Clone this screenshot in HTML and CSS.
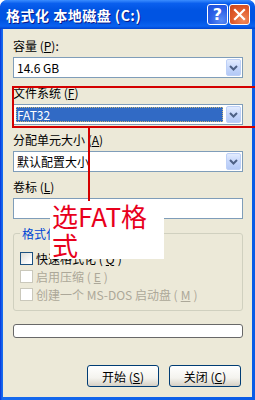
FILE: index.html
```html
<!DOCTYPE html>
<html lang="zh-CN">

<head>
    <meta charset="utf-8">
    <title>格式化 本地磁盘 (C:)</title>
    <link rel="stylesheet" href="styles.css">
</head>

<body>
    <div class="window">
        <div class="titlebar">
            <span class="title">格式化 本地磁盘 (C:)</span>
            <div class="caption-buttons">
                <span class="cap-btn help">?</span>
                <span class="cap-btn close">
                    <svg width="13" height="13" viewBox="0 0 13 13">
                        <path d="M2 2 L11 11 M11 2 L2 11" stroke="#fff" stroke-width="2.2" stroke-linecap="square" />
                    </svg>
                </span>
            </div>
        </div>

        <div class="client">
            <div class="field-label">容量 (<u>P</u>):</div>
            <div class="combo">
                <span class="combo-text">14.6 GB</span>
                <span class="drop"><svg width="9" height="6" viewBox="0 0 9 6"><path d="M1 1 L4.5 4.5 L8 1" fill="none" stroke="#4d6185" stroke-width="2" /></svg></span>
            </div>

            <div class="field-label">文件系统 (<u>F</u>)</div>
            <div class="combo">
                <span class="combo-text selected">FAT32</span>
                <span class="drop"><svg width="9" height="6" viewBox="0 0 9 6"><path d="M1 1 L4.5 4.5 L8 1" fill="none" stroke="#4d6185" stroke-width="2" /></svg></span>
            </div>

            <div class="field-label">分配单元大小 (<u>A</u>)</div>
            <div class="combo">
                <span class="combo-text">默认配置大小</span>
                <span class="drop"><svg width="9" height="6" viewBox="0 0 9 6"><path d="M1 1 L4.5 4.5 L8 1" fill="none" stroke="#4d6185" stroke-width="2" /></svg></span>
            </div>

            <div class="field-label">卷标 (<u>L</u>)</div>
            <div class="textbox"></div>

            <fieldset class="group">
                <legend>格式化选项</legend>
                <div class="check"><span class="box"></span>快速格式化 (<u>Q</u>)</div>
                <div class="check disabled"><span class="box"></span>启用压缩 (<u>E</u>)</div>
                <div class="check disabled"><span class="box"></span>创建一个 MS-DOS 启动盘 (<u>M</u>)</div>
            </fieldset>

            <div class="progress"></div>

            <div class="actions">
                <span class="btn">开始 (<u>S</u>)</span>
                <span class="btn">关闭 (<u>C</u>)</span>
            </div>
        </div>

        <!-- Annotation drawn over the dialog -->
        <div class="mark-box"></div>
        <div class="mark-line"></div>
        <div class="mark-note">选FAT格式</div>
    </div>
</body>

</html>
```

FILE: styles.css
```css
* {
    margin: 0;
    padding: 0;
    box-sizing: border-box;
}

html,
body {
    width: 255px;
    height: 400px;
    overflow: hidden;
    background: #fff;
    font-family: "Noto Sans CJK SC", sans-serif;
    font-size: 12px;
    color: #000;
}

u {
    text-decoration: underline;
    text-underline-offset: 1px;
}

/* Window frame */
.window {
    position: relative;
    width: 255px;
    height: 400px;
    display: flex;
    flex-direction: column;
    background: linear-gradient(90deg, #0831d9 0px, #166aee 2px, #0a5be6 100%);
    border-radius: 7px 7px 0 0;
    overflow: hidden;
}

.titlebar {
    height: 29px;
    display: flex;
    align-items: center;
    justify-content: space-between;
    padding: 0 5px 0 6px;
    background: linear-gradient(180deg, #3b8dff 0%, #0a5fee 12%, #0054e3 35%, #0054e3 70%, #0a62f0 90%, #0043cf 100%);
    border-radius: 7px 7px 0 0;
}

.title {
    color: #fff;
    font-weight: bold;
    font-size: 14px;
    letter-spacing: 0.5px;
    text-shadow: 1px 1px 0 #0a1a8a;
    margin-top: 1px;
}

.caption-buttons {
    display: flex;
    gap: 1px;
}

.cap-btn {
    width: 21px;
    height: 21px;
    display: flex;
    align-items: center;
    justify-content: center;
    border: 1px solid #fff;
    border-radius: 3px;
    color: #fff;
}

.help {
    background: radial-gradient(circle at 70% 80%, #5a8cf5 0%, #2a5ee6 55%, #1c4fdb 100%);
    font-family: "DejaVu Sans", sans-serif;
    font-weight: bold;
    font-size: 16px;
}

.close {
    background: radial-gradient(circle at 70% 80%, #f08a5c 0%, #e05a2a 55%, #c8431a 100%);
}

/* Client area */
.client {
    flex: 1;
    margin: 0 3px 3px 3px;
    background: #ece9d8;
    display: flex;
    flex-direction: column;
    padding: 10px 9px 10px 10px;
}

.field-label {
    height: 13px;
    line-height: 13px;
    margin-bottom: 5px;
}

.combo {
    height: 21px;
    display: flex;
    align-items: center;
    justify-content: space-between;
    background: #fff;
    border: 1px solid #7f9db9;
    padding: 0 1px 0 2px;
    margin-bottom: 8px;
}

.combo-text {
    flex: 1;
    height: 15px;
    line-height: 15px;
    padding-left: 1px;
}

.combo-text.selected {
    background: #316ac5;
    color: #fff;
    outline: 1px dotted #c9b87a;
    outline-offset: -1px;
    margin-right: 3px;
}

.drop {
    width: 15px;
    height: 17px;
    display: flex;
    align-items: center;
    justify-content: center;
    border: 1px solid #bdd0f7;
    border-radius: 2px;
    background: linear-gradient(180deg, #e3ecfe 0%, #c6d7fb 50%, #b3c9f6 100%);
}

.textbox {
    height: 21px;
    background: #fff;
    border: 1px solid #7f9db9;
    margin-bottom: 8px;
}

/* Format options group */
.group {
    border: 1px solid #d0d0bf;
    border-radius: 3px;
    padding: 9px 6px 7px 6px;
    min-width: 0;
}

.group legend {
    color: #0046d5;
    padding: 0 2px;
    line-height: 13px;
}

.check {
    height: 18px;
    display: flex;
    align-items: center;
    gap: 3px;
}

.check .box {
    width: 13px;
    height: 13px;
    border: 1px solid #1c5180;
    background: linear-gradient(135deg, #dcdcd7 0%, #fff 80%);
}

.check.disabled {
    color: #aca899;
}

.check.disabled .box {
    border-color: #cac8bb;
    background: #fff;
}

.progress {
    height: 14px;
    margin-top: 13px;
    border: 1px solid #686868;
    border-radius: 3px;
    background: #fff;
}

.actions {
    margin-top: auto;
    display: flex;
    justify-content: flex-end;
    gap: 10px;
    padding-right: 2px;
}

.btn {
    width: 72px;
    height: 22px;
    display: flex;
    align-items: center;
    justify-content: center;
    border: 1px solid #003c74;
    border-radius: 3px;
    background: linear-gradient(180deg, #fff 0%, #f4f3ee 60%, #d6d0c5 100%);
}

/* Annotation overlay */
.mark-box {
    position: absolute;
    left: 12px;
    top: 86px;
    width: 260px;
    height: 42px;
    border: 2px solid #d40000;
}

.mark-line {
    position: absolute;
    left: 88px;
    top: 128px;
    width: 2px;
    height: 74px;
    background: #d40000;
}

.mark-note {
    position: absolute;
    left: 50px;
    top: 201px;
    width: 114px;
    height: 58px;
    padding-left: 2px;
    background: #fff;
    color: #e8001c;
    font-size: 26px;
    line-height: 29px;
}
```
